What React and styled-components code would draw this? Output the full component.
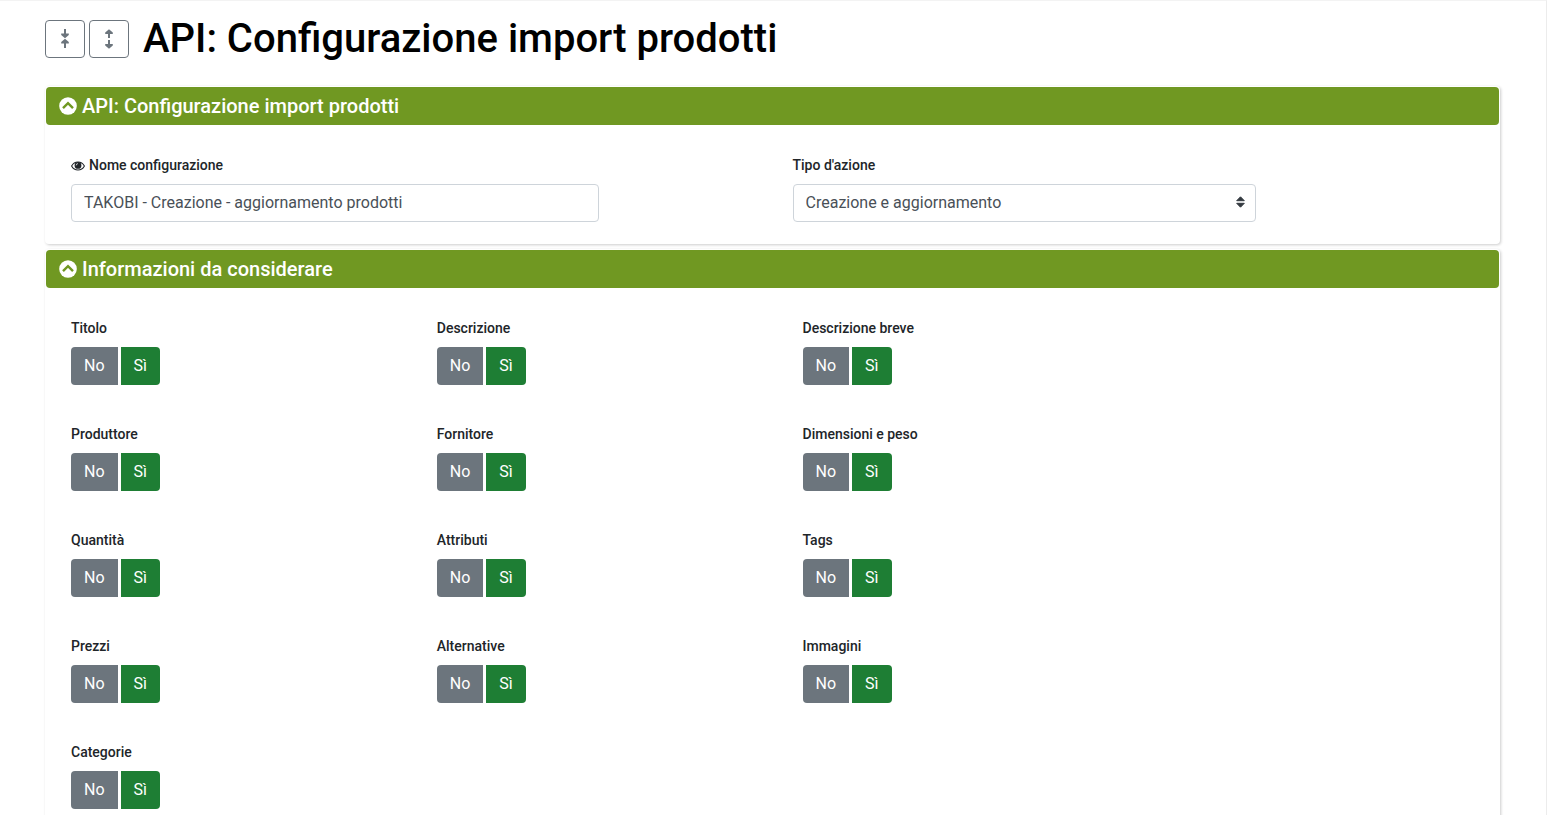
import React, { useState } from "react";
import styled, { createGlobalStyle, css } from "styled-components";

const GlobalStyle = createGlobalStyle`
  *, *::before, *::after { box-sizing: border-box; }
  body {
    margin: 0;
    background: #fff;
    color: #212529;
    font-family: Roboto, "Liberation Sans", sans-serif;
    font-size: 16px;
    line-height: 24px;
  }
`;

const Page = styled.main`
  min-height: 100vh;
  padding: 14px 46px 0 45px;
  border-top: 1px solid #f3f3f3;
  border-right: 1px solid #ececec;
`;

const TitleBar = styled.header`
  display: flex;
  align-items: center;
  gap: 4px;
  margin-bottom: 23px;
`;

const IconButton = styled.button`
  display: flex;
  align-items: center;
  justify-content: center;
  width: 40px;
  height: 38px;
  padding: 0;
  color: #6c757d;
  background: transparent;
  border: 1px solid #6c757d;
  border-radius: 4px;
  cursor: pointer;
`;

const Title = styled.h1`
  margin: 0 0 0 10px;
  color: #000;
  font-size: 40px;
  font-weight: 500;
  line-height: 48px;
`;

const Card = styled.section`
  margin-bottom: 5px;
  padding: 1px 1px 0;
  border-radius: 4px;
  box-shadow: 1px 1px 3px rgba(0, 0, 0, 0.2);
`;

const CardHeader = styled.h2`
  margin: 0;
  border-radius: 4px;
  background: #709822;
`;

const CardToggle = styled.button`
  display: flex;
  align-items: center;
  gap: 5px;
  width: 100%;
  height: 38px;
  padding: 0 13px;
  border: 0;
  background: transparent;
  color: #fff;
  font: inherit;
  font-size: 20px;
  font-weight: 500;
  cursor: pointer;
`;

const Fields = styled.div`
  display: grid;
  grid-template-columns: repeat(${(p) => p.$columns}, minmax(0, 1fr));
  gap: 39px ${(p) => p.$gap}px;
  padding: 30px 25px 22px;
`;

const labelText = css`
  display: flex;
  align-items: center;
  gap: 4px;
  margin: 0 0 8px;
  padding: 0;
  font-size: 14px;
  font-weight: 500;
  line-height: 21px;
`;

const Label = styled.label`
  ${labelText}
`;

const control = css`
  height: 38px;
  border: 1px solid #ced4da;
  border-radius: 4px;
  background: #fff;
  color: #495057;
  font: inherit;
`;

const TextInput = styled.input`
  ${control}
  display: block;
  width: 77.5%;
  padding: 5px 12px 7px;
`;

const SelectBox = styled.div`
  position: relative;
  width: 68%;

  svg {
    position: absolute;
    top: 12px;
    right: 11px;
    pointer-events: none;
  }
`;

const Select = styled.select`
  ${control}
  display: block;
  width: 100%;
  padding: 0 12px;
  appearance: none;
`;

const Group = styled.fieldset`
  min-width: 0;
  margin: 0;
  padding: 0;
  border: 0;
`;

const Legend = styled.legend`
  ${labelText}
`;

const Choices = styled.div`
  display: flex;
  gap: 3px;
`;

const Choice = styled.label`
  position: relative;
  padding: 7px 13px;
  border-radius: ${(p) => (p.$last ? "0 4px 4px 0" : "4px 0 0 4px")};
  background: ${(p) => (p.$active ? "#1e7e34" : "#6c757d")};
  color: #fff;
  cursor: pointer;
`;

const Radio = styled.input`
  position: absolute;
  inset: 0;
  margin: 0;
  opacity: 0;
`;

const ArrowsIn = () => (
  <svg width="8" height="20" viewBox="0 0 8 20" fill="currentColor" aria-hidden="true">
    <path d="M3 0h2v4.500h2.800v1.500L4 9.300.2 6V4.500H3zM3 19h2v-4.500h2.800V13L4 9.700.2 13v1.500H3z" />
  </svg>
);

const ArrowsOut = () => (
  <svg width="8" height="20" viewBox="0 0 8 20" fill="currentColor" aria-hidden="true">
    <path d="M3 9h2V5h2.800V3.600L4 .3.2 3.600V5H3zM3 11h2v4h2.800v1.400L4 19.700.2 16.400V15H3z" />
  </svg>
);

const ChevronCircle = ({ open }) => (
  <svg width="18" height="18" viewBox="0 0 18 18" aria-hidden="true">
    <circle cx="9" cy="9" r="8.800" fill="#fff" />
    <path d={open ? "M4 11.200L9 6.200l5 5" : "M4 6.800l5 5 5-5"} fill="none" stroke="#709822" strokeWidth="2.400" />
  </svg>
);

const Eye = () => (
  <svg width="14" height="12" viewBox="0 0 14 12" aria-hidden="true">
    <path d="M.6 6C3.500 .6 10.500 .6 13.400 6 10.500 11.400 3.500 11.400 .6 6z" fill="none" stroke="#212529" strokeWidth="1.100" />
    <circle cx="7" cy="5.400" r="3.400" fill="#212529" />
    <path d="M5.200 5.400A1.800 1.800 0 0 1 7 3.600" fill="none" stroke="#fff" strokeWidth=".7" />
  </svg>
);

const SelectArrows = () => (
  <svg width="9" height="12" viewBox="0 0 9 12" fill="#343a40" stroke="#343a40" strokeLinejoin="round" aria-hidden="true">
    <path d="M4.500 .8l3.800 3.900H.7zM4.500 11.200L.7 7.300h7.600z" />
  </svg>
);

function Panel({ title, children }) {
  const [open, setOpen] = useState(true);
  return (
    <Card>
      <CardHeader>
        <CardToggle type="button" aria-expanded={open} onClick={() => setOpen(!open)}>
          <ChevronCircle open={open} />
          {title}
        </CardToggle>
      </CardHeader>
      {open && children}
    </Card>
  );
}

function YesNo({ name }) {
  const [value, setValue] = useState("Sì");
  return (
    <Group>
      <Legend>{name}</Legend>
      <Choices>
        {["No", "Sì"].map((option) => (
          <Choice key={option} $active={value === option} $last={option === "Sì"}>
            <Radio type="radio" name={name} checked={value === option} onChange={() => setValue(option)} />
            {option}
          </Choice>
        ))}
      </Choices>
    </Group>
  );
}

const options = [
  "Titolo", "Descrizione", "Descrizione breve", null,
  "Produttore", "Fornitore", "Dimensioni e peso", null,
  "Quantità", "Attributi", "Tags", null,
  "Prezzi", "Alternative", "Immagini", null,
  "Categorie",
];

export default function App() {
  return (
    <>
      <GlobalStyle />
      <Page>
        <TitleBar>
          <IconButton type="button" aria-label="Comprimi tutto"><ArrowsIn /></IconButton>
          <IconButton type="button" aria-label="Espandi tutto"><ArrowsOut /></IconButton>
          <Title>API: Configurazione import prodotti</Title>
        </TitleBar>
        <Panel title="API: Configurazione import prodotti">
          <Fields $columns={2} $gap={40}>
            <div>
              <Label htmlFor="nome"><Eye />Nome configurazione</Label>
              <TextInput id="nome" type="text" defaultValue="TAKOBI - Creazione - aggiornamento prodotti" />
            </div>
            <div>
              <Label htmlFor="azione">Tipo d'azione</Label>
              <SelectBox>
                <Select id="azione" defaultValue="Creazione e aggiornamento">
                  <option>Creazione e aggiornamento</option>
                </Select>
                <SelectArrows />
              </SelectBox>
            </div>
          </Fields>
        </Panel>
        <Panel title="Informazioni da considerare">
          <Fields $columns={4} $gap={60}>
            {options.map((name, i) => (name ? <YesNo key={name} name={name} /> : <span key={i} />))}
          </Fields>
        </Panel>
      </Page>
    </>
  );
}
